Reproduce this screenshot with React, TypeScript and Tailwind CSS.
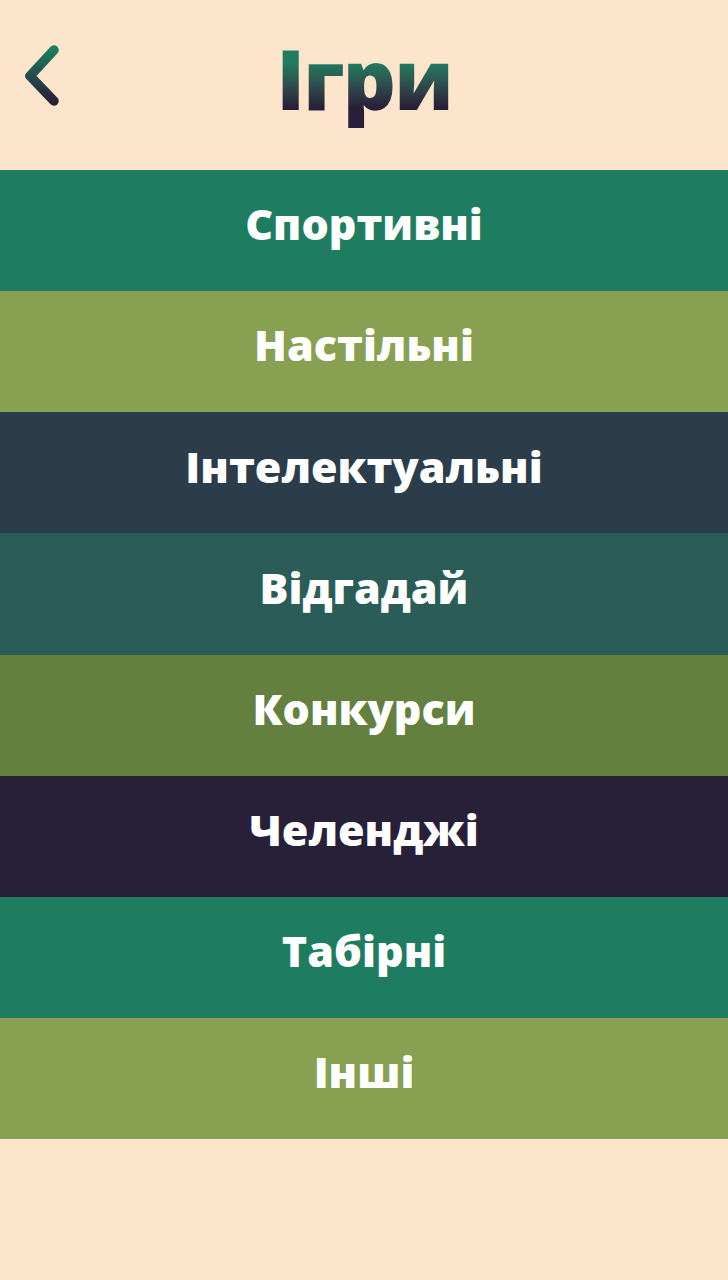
import React from "react";

const categories = [
  { name: "Спортивні", bg: "bg-[#1e7c60]" },
  { name: "Настільні", bg: "bg-[#88a052]" },
  { name: "Інтелектуальні", bg: "bg-[#2b3d4b]" },
  { name: "Відгадай", bg: "bg-[#2a5d58]" },
  { name: "Конкурси", bg: "bg-[#64803f]" },
  { name: "Челенджі", bg: "bg-[#281f38]" },
  { name: "Табірні", bg: "bg-[#1e7c60]" },
  { name: "Інші", bg: "bg-[#88a052]" },
];

const App = () => {
  return (
    <div className="min-h-[1280px] w-full bg-[#fde5cc] font-['Open_Sans','Lato',sans-serif]">
      {/* Header */}
      <header className="relative flex h-[170px] items-center justify-center">
        <button className="absolute left-[22px] top-[44px]" aria-label="Назад">
          <svg width="40" height="64" viewBox="0 0 40 64">
            <defs>
              <linearGradient id="backGrad" x1="0" y1="0" x2="0" y2="1">
                <stop offset="0%" stopColor="#1e7c60" />
                <stop offset="100%" stopColor="#281f38" />
              </linearGradient>
            </defs>
            <path
              d="M32 6 L8 32 L32 57"
              fill="none"
              stroke="url(#backGrad)"
              strokeWidth="9.5"
              strokeLinecap="round"
              strokeLinejoin="round"
            />
          </svg>
        </button>
        <h1 className="-mt-[14px] bg-gradient-to-b from-[#1e7c60] from-35% to-[#281f38] to-80% bg-clip-text text-[83px] font-extrabold leading-[1.2] tracking-[-2px] text-transparent">
          Ігри
        </h1>
      </header>

      {/* Categories */}
      <nav className="flex flex-col">
        {categories.map((c) => (
          <a
            key={c.name}
            href="#"
            className={`flex h-[121.125px] items-center justify-center ${c.bg}`}
          >
            <span className="-mt-[12px] text-[43px] font-extrabold text-white">
              {c.name}
            </span>
          </a>
        ))}
      </nav>
    </div>
  );
};

export default App;
